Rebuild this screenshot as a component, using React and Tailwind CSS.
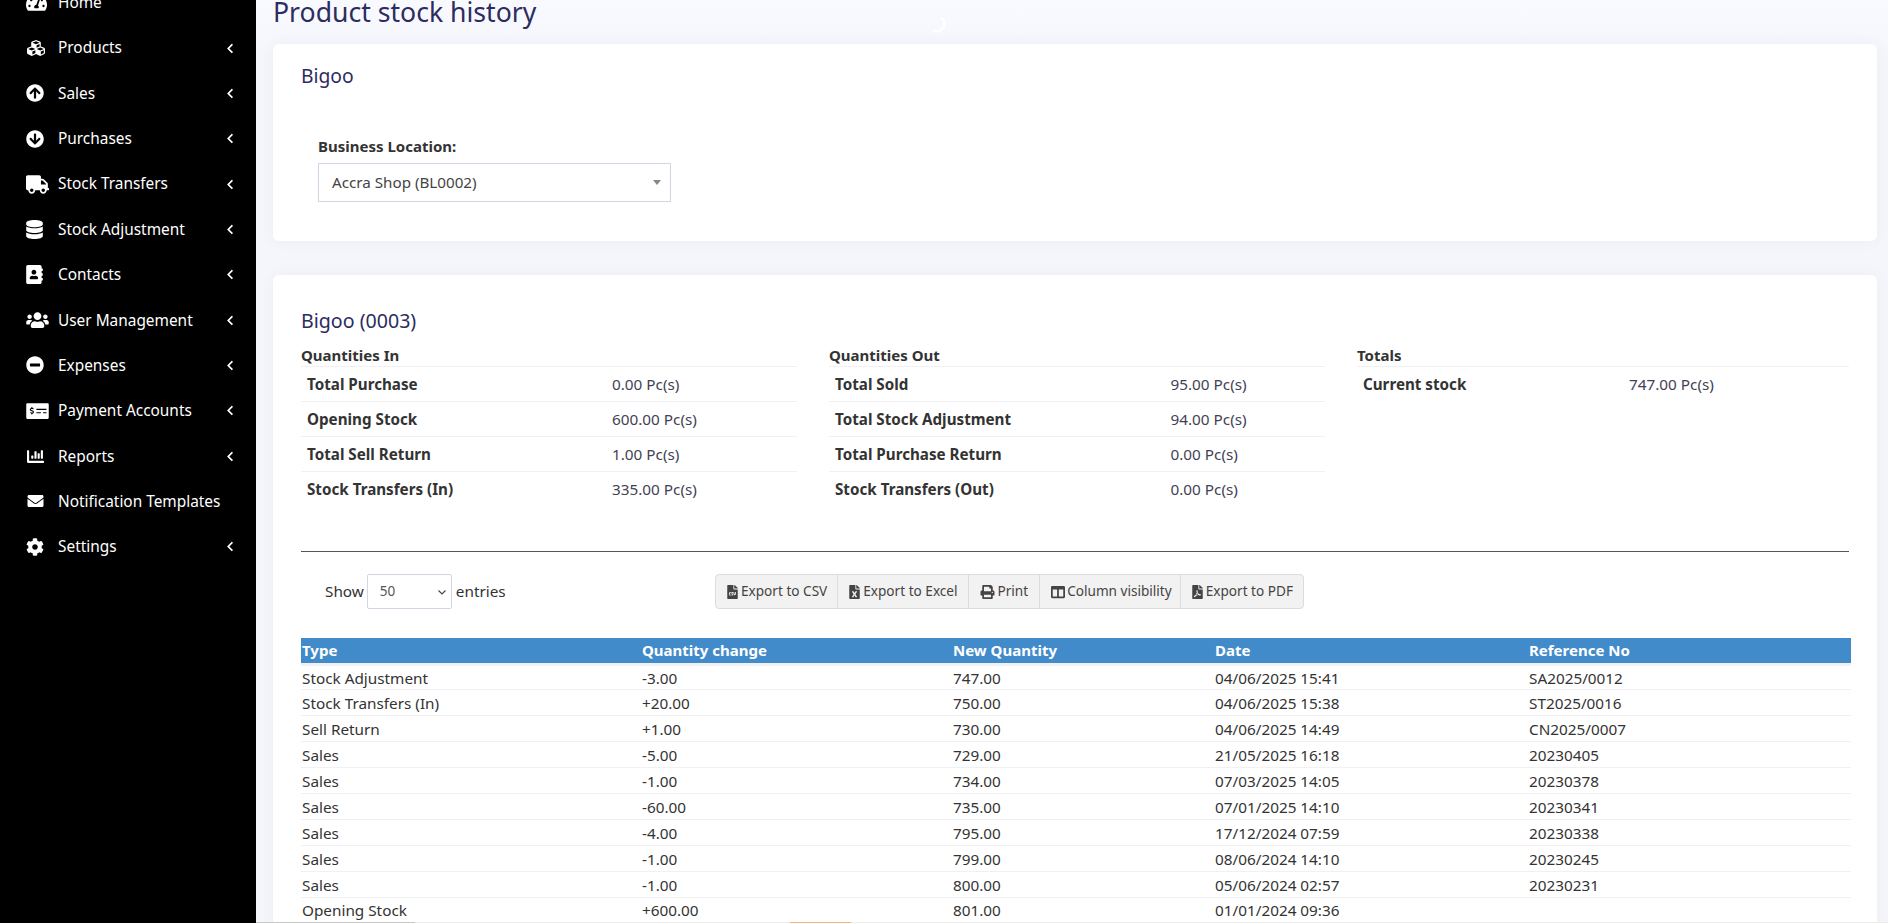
import React from 'react';
import {
    FaTachometerAlt, FaCubes, FaArrowCircleUp, FaArrowCircleDown, FaTruck, FaDatabase, FaAddressBook, FaUsers,
    FaMinusCircle, FaMoneyCheckAlt, FaChartBar, FaEnvelope, FaCog, FaChevronLeft, FaFileCsv, FaFileExcel, FaPrint, FaColumns, FaFilePdf,
} from 'react-icons/fa';

const menu = [
    { label: 'Home', icon: FaTachometerAlt, size: 'w-[21px] h-[19px]' },
    { label: 'Products', icon: FaCubes, size: 'w-[20px] h-[18px]', sub: true },
    { label: 'Sales', icon: FaArrowCircleUp, size: 'w-[18px] h-[18px]', sub: true },
    { label: 'Purchases', icon: FaArrowCircleDown, size: 'w-[18px] h-[18px]', sub: true },
    { label: 'Stock Transfers', icon: FaTruck, size: 'w-[23px] h-[19px]', sub: true },
    { label: 'Stock Adjustment', icon: FaDatabase, size: 'w-[17px] h-[19px]', sub: true },
    { label: 'Contacts', icon: FaAddressBook, size: 'w-[17px] h-[19px]', sub: true },
    { label: 'User Management', icon: FaUsers, size: 'w-[23px] h-[18px]', sub: true },
    { label: 'Expenses', icon: FaMinusCircle, size: 'w-[18px] h-[18px]', sub: true },
    { label: 'Payment Accounts', icon: FaMoneyCheckAlt, size: 'w-[23px] h-[18px]', sub: true },
    { label: 'Reports', icon: FaChartBar, size: 'w-[19px] h-[17px]', sub: true },
    { label: 'Notification Templates', icon: FaEnvelope, size: 'w-[19px] h-[16px]' },
    { label: 'Settings', icon: FaCog, size: 'w-[18px] h-[18px]', sub: true },
];

const quantitiesIn = [
    ['Total Purchase', '0.00 Pc(s)'],
    ['Opening Stock', '600.00 Pc(s)'],
    ['Total Sell Return', '1.00 Pc(s)'],
    ['Stock Transfers (In)', '335.00 Pc(s)'],
];

const quantitiesOut = [
    ['Total Sold', '95.00 Pc(s)'],
    ['Total Stock Adjustment', '94.00 Pc(s)'],
    ['Total Purchase Return', '0.00 Pc(s)'],
    ['Stock Transfers (Out)', '0.00 Pc(s)'],
];

const buttons = [
    { label: 'Export to CSV', icon: FaFileCsv, iconClass: 'w-[11px] mr-[3px]', pad: 'pl-[11px] pr-[10px]' },
    { label: 'Export to Excel', icon: FaFileExcel, iconClass: 'w-[11px] mr-[3px]', pad: 'pl-[11px] pr-[10px]' },
    { label: 'Print', icon: FaPrint, iconClass: 'w-[15px] mr-[3px]', pad: 'pl-[11px] pr-[11px]' },
    { label: 'Column visibility', icon: FaColumns, iconClass: 'w-[14px] mr-[2px]', pad: 'pl-[11px] pr-[8px]' },
    { label: 'Export to PDF', icon: FaFilePdf, iconClass: 'w-[11px] mr-[3px]', pad: 'pl-[11px] pr-[10px]' },
];

const rows = [
    ['Stock Adjustment', '-3.00', '747.00', '04/06/2025 15:41', 'SA2025/0012'],
    ['Stock Transfers (In)', '+20.00', '750.00', '04/06/2025 15:38', 'ST2025/0016'],
    ['Sell Return', '+1.00', '730.00', '04/06/2025 14:49', 'CN2025/0007'],
    ['Sales', '-5.00', '729.00', '21/05/2025 16:18', '20230405'],
    ['Sales', '-1.00', '734.00', '07/03/2025 14:05', '20230378'],
    ['Sales', '-60.00', '735.00', '07/01/2025 14:10', '20230341'],
    ['Sales', '-4.00', '795.00', '17/12/2024 07:59', '20230338'],
    ['Sales', '-1.00', '799.00', '08/06/2024 14:10', '20230245'],
    ['Sales', '-1.00', '800.00', '05/06/2024 02:57', '20230231'],
    ['Opening Stock', '+600.00', '801.00', '01/01/2024 09:36', ''],
];

const StatTable = ({ title, items, valueCol }) => (
    <div className='text-[15.3px] text-[#333]'>
        <div className='h-[20px] leading-[20px] font-bold text-[15px] border-b border-[#f1f1f4] box-content pb-[1px]'>{title}</div>
        {items.map(([name, value], i) => (
            <div key={name} className={`flex h-[35px] items-center pl-[6px] ${i < items.length - 1 ? 'border-b border-[#f1f1f4]' : ''}`}>
                <div className={`${valueCol} font-bold text-[15.2px] shrink-0`}>{name}</div>
                <div className='text-[#3f4254]'>{value}</div>
            </div>
        ))}
    </div>
);

const App = () => {
    return (
        <div className="h-[923px] overflow-hidden flex bg-[#f5f6fb] font-['Noto_Sans','Open_Sans',sans-serif]">
            {/* Sidebar */}
            <aside className='w-[256px] shrink-0 bg-black text-white pl-[26px] pr-[22px] -mt-[20px] h-[943px]'>
                {menu.map(item => (
                    <div key={item.label} className='flex items-center h-[45.35px] text-[15.4px]'>
                        <span className='w-[32px] shrink-0'>
                            <item.icon className={item.size} />
                        </span>
                        <span>{item.label}</span>
                        {item.sub && <FaChevronLeft className='ml-auto w-[8px] h-[11px]' />}
                    </div>
                ))}
            </aside>

            {/* Content */}
            <main className='flex-1 min-w-0 pl-[17px] pr-[11px] relative bg-gradient-to-b from-[#f9faff] to-[#f5f6fb] to-[60px]'>
                <h1 className='text-[26.6px] leading-[28px] h-[46px] -mt-[2px] text-[#2d2c5e]'>Product stock history</h1>
                <svg className='absolute left-[673px] top-[15px] w-[18px] h-[18px]' viewBox='0 0 18 18' fill='none'>
                    <path d='M12 2.5 A7 7 0 0 1 4 15' stroke='#ffffff' strokeWidth='2.5' />
                </svg>

                <section className='bg-white rounded-[6px] h-[197px] shadow-[0_0_14px_rgba(82,63,105,0.05)] px-[28px] pt-[18px]'>
                    <h3 className='text-[19.3px] leading-[28px] text-[#2d2c5e]'>Bigoo</h3>
                    <div className='pl-[17px] mt-[46px]'>
                        <label className='block text-[15px] leading-[20px] font-bold text-[#333]'>Business Location:</label>
                        <div className='mt-[7px] w-[353px] h-[39px] border border-[#d2d6e2] flex items-center justify-between pl-[13px] pr-[9px] text-[15.2px] text-[#444]'>
                            <span>Accra Shop (BL0002)</span>
                            <span className='w-0 h-0 border-x-[4px] border-x-transparent border-t-[5px] border-t-[#888]' />
                        </div>
                    </div>
                </section>

                <section className='mt-[34px] bg-white rounded-[6px] h-[700px] shadow-[0_0_14px_rgba(82,63,105,0.05)] px-[28px] pt-[32px]'>
                    <h3 className='text-[19.6px] leading-[28px] text-[#2d2c5e]'>Bigoo (0003)</h3>
                    <div className='grid grid-cols-[496px_496px_492px] gap-x-[32px] mt-[10px]'>
                        <StatTable title='Quantities In' items={quantitiesIn} valueCol='w-[305px]' />
                        <StatTable title='Quantities Out' items={quantitiesOut} valueCol='w-[335.5px]' />
                        <StatTable title='Totals' items={[['Current stock', '747.00 Pc(s)']]} valueCol='w-[266px]' />
                    </div>

                    <hr className='mt-[44px] border-t border-[#555]' />

                    <div className='flex items-center h-[35px] mt-[22px] text-[15.3px] text-[#333]'>
                        <div className='flex items-center pl-[24px] w-[415px]'>
                            <span>Show</span>
                            <div className='ml-[3px] w-[85px] h-[35px] border border-[#d2d6e2] rounded-[2px] flex items-center justify-between pl-[12px] pr-[2px] text-[13.5px] text-[#555]'>
                                <span>50</span>
                                <svg width='14' height='14' viewBox='0 0 14 14' fill='none'><path d='M3.5 5.5l3.5 3.5 3.5-3.5' stroke='#444' strokeWidth='1.1' /></svg>
                            </div>
                            <span className='ml-[4px]'>entries</span>
                        </div>
                        <div className='ml-[-1px] flex h-[35px] border border-[#dcdcdc] rounded-[4px] bg-[#f2f2f2] text-[13.6px] text-[#444]'>
                            {buttons.map((b, i) => (
                                <div key={b.label} className={`flex items-center ${b.pad} ${i > 0 ? 'border-l border-[#dcdcdc]' : ''}`}>
                                    <b.icon className={`${b.iconClass} h-[14px]`} />
                                    <span>{b.label}</span>
                                </div>
                            ))}
                        </div>
                    </div>

                    <table className='mt-[29px] w-[1550px] table-fixed border-collapse text-[15.3px] text-[#333]'>
                        <colgroup>
                            <col className='w-[340px]' />
                            <col className='w-[311px]' />
                            <col className='w-[262px]' />
                            <col className='w-[314px]' />
                            <col />
                        </colgroup>
                        <thead>
                            <tr className='bg-[#428bca] text-white text-[15px] text-left h-[26px] border-b-[3px] border-[#f1f1f4]'>
                                <th className='px-[1px] font-bold'>Type</th>
                                <th className='px-[1px] font-bold'>Quantity change</th>
                                <th className='px-[1px] font-bold'>New Quantity</th>
                                <th className='px-[1px] font-bold'>Date</th>
                                <th className='px-[1px] font-bold'>Reference No</th>
                            </tr>
                        </thead>
                        <tbody>
                            {rows.map((r, i) => (
                                <tr key={i} className='h-[25.95px] border-b border-[#f1f1f4]'>
                                    {r.map((cell, j) => <td key={j} className='px-[1px] pt-[1px]'>{cell}</td>)}
                                </tr>
                            ))}
                        </tbody>
                    </table>
                </section>

                {/* thin strip along the bottom edge of the window */}
                <div className='absolute left-0 right-0 bottom-0 h-[1px] flex bg-[#ececec]'>
                    <div className='w-[159px] bg-[#c8c8c8]' />
                    <div className='ml-[375px] w-[61px] bg-[#f5b57a]' />
                </div>
            </main>
        </div>
    );
};

export default App;
